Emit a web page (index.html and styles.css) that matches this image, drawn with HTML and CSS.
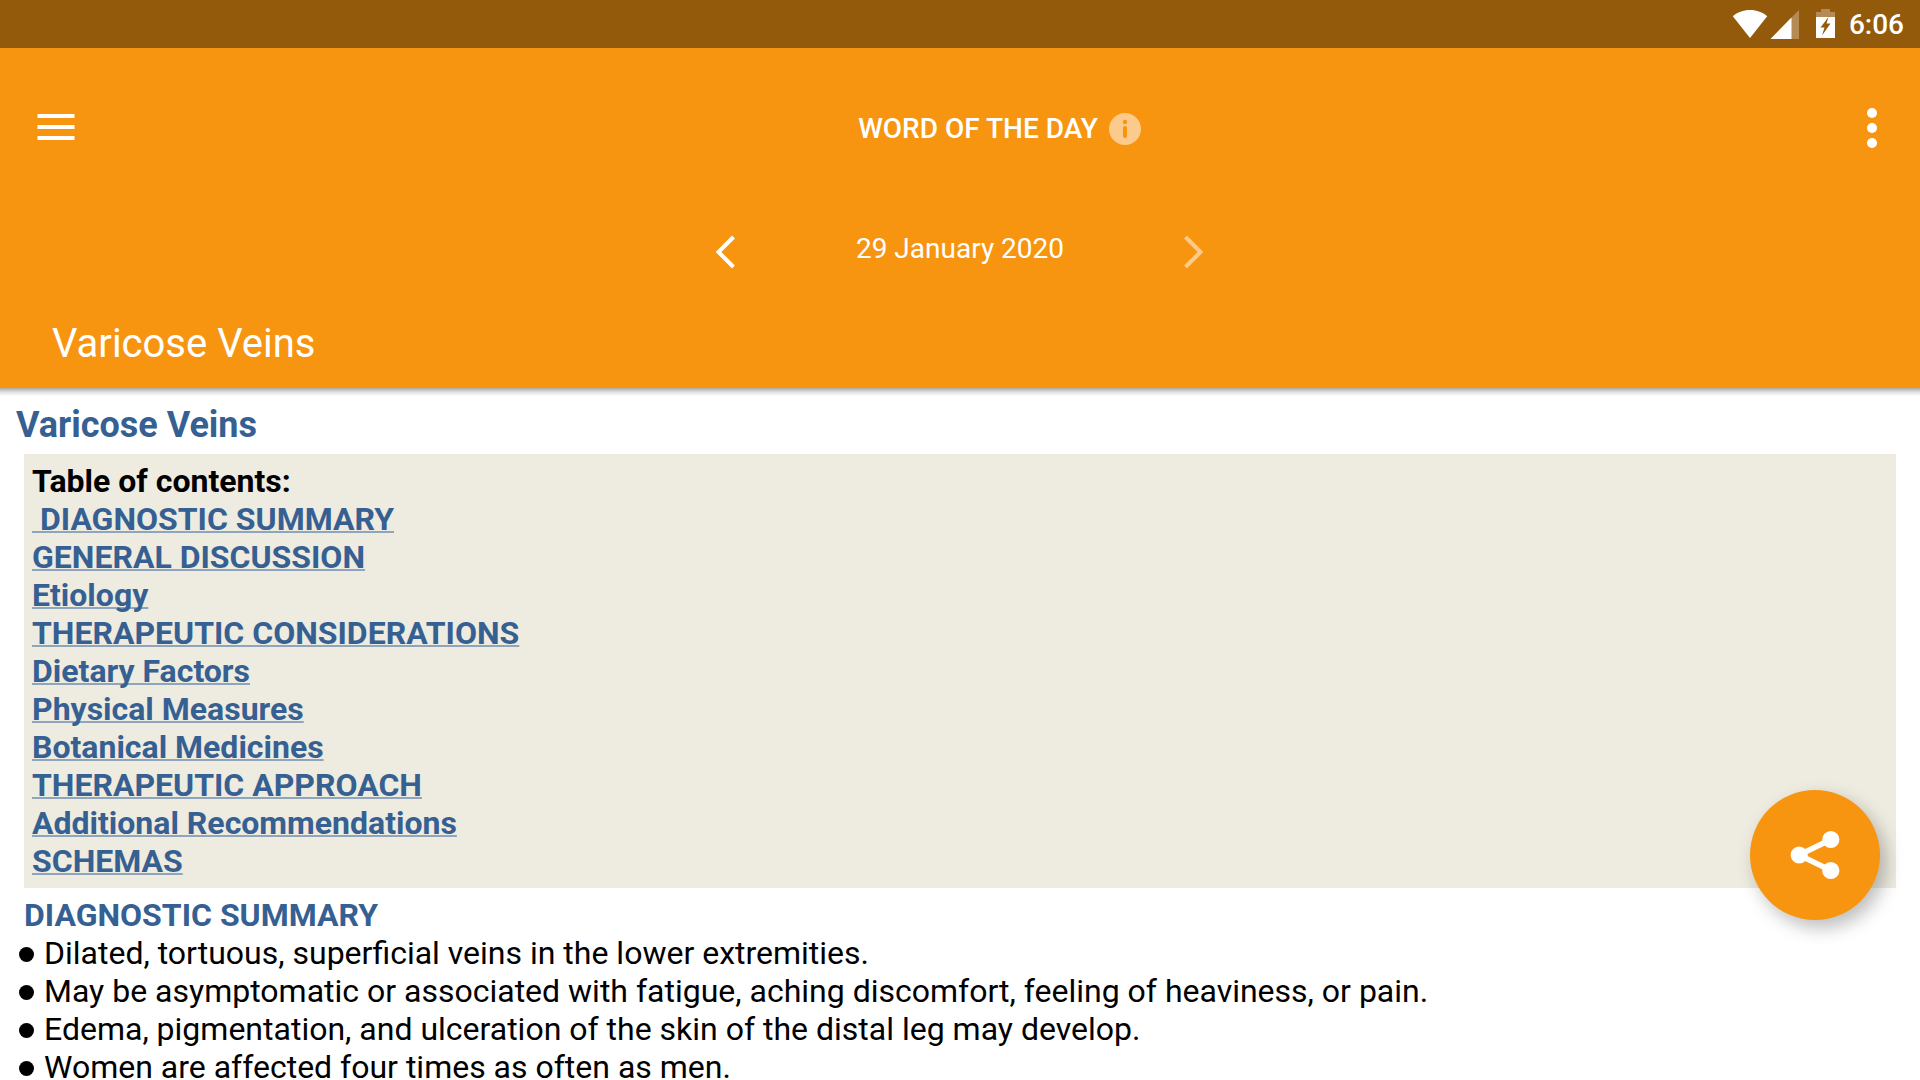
FILE: index.html
```html
<!DOCTYPE html>
<html lang="en">
<head>
<meta charset="utf-8">
<meta name="viewport" content="width=device-width, initial-scale=1">
<title>Word of the Day</title>
<link rel="stylesheet" href="styles.css">
</head>
<body>
<div class="status-bar">
  <svg class="wifi" width="36" height="30" viewBox="0 0 36 30" aria-hidden="true"><path fill="#fff" d="M18 29L.8 7.200C5.500 3.300 11 1 18 1s12.500 2.300 17.200 6.200z"/></svg>
  <svg class="signal" width="30" height="30" viewBox="0 0 30 30" aria-hidden="true"><path fill="#fff" fill-opacity=".3" d="M29 1v29H.5z"/><path fill="#fff" d="M21.500 8.500V30H.5z"/></svg>
  <svg class="battery" width="20" height="30" viewBox="0 0 20 30" aria-hidden="true"><path fill="#fff" fill-opacity=".3" d="M5 0h9v3h5v5H0V3h5z"/><path fill="#fff" fill-rule="evenodd" d="M0 8h19v21H0zM12.500 8L4.500 18.500h4L6 26.500 14.500 14.500h-4z"/></svg>
  <time class="clock">6:06</time>
</div>
<header class="header">
  <div class="toolbar">
    <button class="icon-button" type="button" aria-label="Menu">
      <svg width="38" height="28" viewBox="0 0 38 28"><path fill="#fff" d="M.5 0h37v4H.5zM.5 11h37v4H.5zM.5 22h37v4H.5z"/></svg>
    </button>
    <div class="toolbar-title">
      <h1 class="app-title">WORD OF THE DAY</h1>
      <button class="info-button" type="button" aria-label="Information">
        <svg width="32" height="32" viewBox="0 0 32 32"><circle cx="16" cy="16" r="16" fill="#fcca8a"/><circle cx="16" cy="9" r="2.200" fill="#f79511"/><rect x="14" y="13" width="4" height="12" rx="2" fill="#f79511"/></svg>
      </button>
    </div>
    <button class="icon-button" type="button" aria-label="More options">
      <svg width="10" height="40" viewBox="0 0 10 40" fill="#fff"><circle cx="5" cy="5" r="5"/><circle cx="5" cy="20" r="5"/><circle cx="5" cy="35" r="5"/></svg>
    </button>
  </div>
  <div class="date-row">
    <button class="arrow-button" type="button" aria-label="Previous day">
      <svg width="22" height="34" viewBox="0 0 22 34"><path fill="none" stroke="#fff" stroke-width="4" d="M18.500 2L3.500 17l15 15"/></svg>
    </button>
    <time class="date" datetime="2020-01-29">29 January 2020</time>
    <button class="arrow-button" type="button" aria-label="Next day" disabled>
      <svg width="22" height="34" viewBox="0 0 22 34"><path fill="none" stroke="#fcca8a" stroke-width="4" d="M2.500 2l15 15L2.500 32"/></svg>
    </button>
  </div>
  <div class="word">Varicose Veins</div>
</header>
<main class="article">
  <h2 class="article-title">Varicose Veins</h2>
  <nav class="contents" aria-labelledby="contents-title">
    <div id="contents-title">Table of contents:</div>
    <ul class="contents-list">
      <li><a href="#diagnostic-summary">&nbsp;DIAGNOSTIC SUMMARY</a></li>
      <li><a href="#general-discussion">GENERAL DISCUSSION</a></li>
      <li><a href="#etiology">Etiology</a></li>
      <li><a href="#considerations">THERAPEUTIC CONSIDERATIONS</a></li>
      <li><a href="#dietary">Dietary Factors</a></li>
      <li><a href="#physical">Physical Measures</a></li>
      <li><a href="#botanical">Botanical Medicines</a></li>
      <li><a href="#approach">THERAPEUTIC APPROACH</a></li>
      <li><a href="#additional">Additional Recommendations</a></li>
      <li><a href="#schemas">SCHEMAS</a></li>
    </ul>
  </nav>
  <h3 class="section-title" id="diagnostic-summary">DIAGNOSTIC SUMMARY</h3>
  <ul class="points">
    <li>Dilated, tortuous, superficial veins in the lower extremities.</li>
    <li>May be asymptomatic or associated with fatigue, aching discomfort, feeling of heaviness, or pain.</li>
    <li>Edema, pigmentation, and ulceration of the skin of the distal leg may develop.</li>
    <li>Women are affected four times as often as men.</li>
  </ul>
</main>
<button class="share-button" type="button" aria-label="Share">
  <svg width="50" height="50" viewBox="0 0 50 50"><path fill="none" stroke="#fff" stroke-width="5.500" d="M41 9.500L9 25l32 15.500"/><g fill="#fff"><circle cx="9.200" cy="25" r="8.600"/><circle cx="40.800" cy="9.500" r="8.600"/><circle cx="40.800" cy="40.500" r="8.600"/></g></svg>
</button>
</body>
</html>
```
FILE: styles.css
```css
:root {
  --orange: #f79511;
  --blue: #366092;
}

* {
  box-sizing: border-box;
}

body {
  margin: 0;
  height: 100vh;
  display: flex;
  flex-direction: column;
  overflow: hidden;
  background: #fff;
  color: #000;
  font-family: Roboto, "Liberation Sans", sans-serif;
  font-size: 32px;
  line-height: 38px;
}

h1, h2, h3, ul {
  margin: 0;
  padding: 0;
}

ul {
  list-style: none;
}

svg {
  display: block;
}

button {
  display: flex;
  align-items: center;
  justify-content: center;
  padding: 0;
  border: 0;
  background: none;
}

.status-bar {
  flex: none;
  display: flex;
  align-items: center;
  justify-content: flex-end;
  height: 48px;
  padding-right: 16px;
  background: #945a0b;
  color: #fff;
}

.signal {
  margin-left: 2px;
}

.battery {
  margin-left: 16px;
}

.clock {
  margin-left: 13px;
  padding-top: 2px;
  font-size: 28px;
  font-weight: 500;
}

.header {
  flex: none;
  background: var(--orange);
  color: #fff;
}

.toolbar {
  display: grid;
  grid-template-columns: 112px 1fr 96px;
  align-items: center;
  height: 160px;
}

.icon-button {
  height: 96px;
}

.toolbar-title {
  display: flex;
  align-items: center;
  justify-content: center;
  gap: 11px;
  padding: 2px 0 0 63px;
}

.app-title {
  font-size: 28px;
  font-weight: 500;
}

.date-row {
  display: flex;
  align-items: center;
  justify-content: center;
  height: 80px;
  padding-top: 2px;
}

.arrow-button {
  width: 96px;
  height: 78px;
  padding-top: 6px;
}

.date {
  width: 372px;
  text-align: center;
  font-size: 28px;
}

.word {
  padding: 32px 52px 20px;
  font-size: 40px;
  line-height: 48px;
}

.article {
  flex: 1;
  min-height: 0;
  overflow-y: auto;
  scrollbar-width: none;
  padding: 16px 16px 0;
  background: linear-gradient(#a8a8a8, #e0e0e0 4px, #fff 8px);
}

.article-title {
  margin-bottom: 8px;
  color: var(--blue);
  font-size: 36px;
  line-height: 42px;
}

.contents {
  margin: 0 8px 8px;
  padding: 8px;
  background: #eeebe0;
  font-weight: 700;
}

.contents a {
  color: var(--blue);
  text-decoration: underline 2px #8fa5bb;
  text-underline-offset: 1px;
  text-decoration-skip-ink: none;
}

.section-title {
  padding-left: 8px;
  color: var(--blue);
  font-size: 32px;
}

.points li {
  display: flex;
  align-items: center;
  gap: 10px;
  padding-left: 3px;
}

.points li::before {
  content: "";
  flex: none;
  width: 15px;
  height: 15px;
  margin-top: 2px;
  border-radius: 50%;
  background: #000;
}

.share-button {
  position: fixed;
  right: 40px;
  bottom: 160px;
  width: 130px;
  height: 130px;
  border-radius: 50%;
  background: var(--orange);
  box-shadow: 6px 8px 18px rgba(0, 0, 0, 0.26);
}
```
